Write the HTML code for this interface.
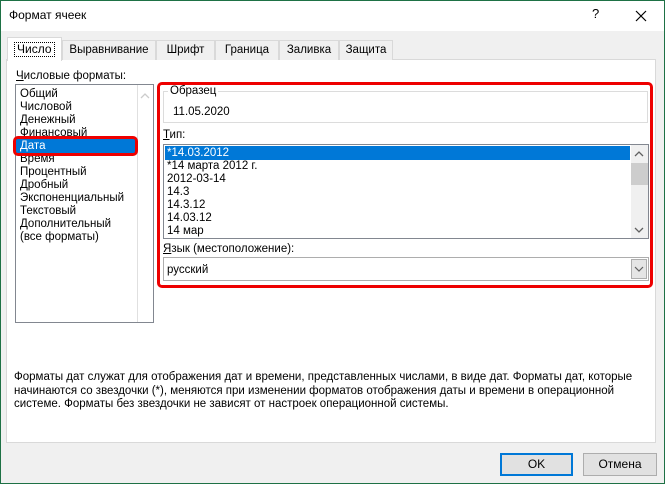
<!DOCTYPE html>
<html><head><meta charset="utf-8"><style>
*{box-sizing:border-box;margin:0;padding:0}
body{width:665px;height:484px;overflow:hidden;background:#f0f0f0;font-family:"Liberation Sans",sans-serif;font-size:11.5px;color:#000;position:relative}
.a{position:absolute}
.win{left:0;top:0;width:665px;height:484px;border:1px solid #1e7145}
.title{left:1px;top:1px;width:663px;height:30px;background:#fff}
.tab{top:40px;height:20px;background:#f0f0f0;border:1px solid #d9d9d9;border-bottom:none;text-align:center;line-height:19px}
.panel{left:6px;top:59px;width:650px;height:384px;background:#fff;border:1px solid #d9d9d9}
.li{left:20px;line-height:13px;white-space:nowrap}
.red{border:3px solid #e00;border-radius:5px}
.btn{top:453px;height:23px;background:#e1e1e1;border:1px solid #adadad;text-align:center;line-height:21px;font-size:12px}
</style></head><body>
<div class="a win"></div>
<div class="a title"></div>
<div class="a" style="left:9px;top:8px;font-size:12px">Формат ячеек</div>
<div class="a" style="left:592px;top:6px;font-size:13px">?</div>
<svg class="a" style="left:635px;top:10px" width="12" height="12"><path d="M1 1L11 11M11 1L1 11" stroke="#000" stroke-width="1.2"/></svg>
<div class="a panel"></div>
<div class="a tab" style="left:62px;width:94px">Выравнивание</div>
<div class="a tab" style="left:156px;width:59px">Шрифт</div>
<div class="a tab" style="left:215px;width:64px">Граница</div>
<div class="a tab" style="left:279px;width:60px">Заливка</div>
<div class="a tab" style="left:339px;width:54px">Защита</div>
<div class="a" style="left:7px;top:37px;width:55px;height:24px;background:#fff;border:1px solid #d9d9d9;border-bottom:none"></div>
<div class="a" style="left:14px;top:42px;padding:0 2px;border:1px dotted #000;line-height:13px;font-size:12px">Число</div>
<div class="a" style="left:16px;top:70px"><u>Ч</u>исловые форматы:</div>
<div class="a" style="left:15px;top:84px;width:139px;height:239px;border:1px solid #828790;background:#fff"></div>
<div class="a" style="left:137px;top:85px;width:1px;height:237px;background:#e0e0e0"></div>
<svg class="a" style="left:140px;top:93px" width="10" height="6"><path d="M1 5L5 1L9 5" stroke="#ccc" fill="none" stroke-width="1.3"/></svg>
<div class="a" style="left:16px;top:139px;width:120px;height:14px;background:#0078d7"></div>
<div class="a li" style="top:88px">Общий</div>
<div class="a li" style="top:101px">Числовой</div>
<div class="a li" style="top:114px">Денежный</div>
<div class="a li" style="top:127px">Финансовый</div>
<div class="a li" style="top:140px;color:#fff">Дата</div>
<div class="a li" style="top:153px">Время</div>
<div class="a li" style="top:166px">Процентный</div>
<div class="a li" style="top:179px">Дробный</div>
<div class="a li" style="top:192px">Экспоненциальный</div>
<div class="a li" style="top:205px">Текстовый</div>
<div class="a li" style="top:218px">Дополнительный</div>
<div class="a li" style="top:231px">(все форматы)</div>
<div class="a red" style="left:13px;top:136px;width:125px;height:20px"></div>

<div class="a" style="left:163px;top:91px;width:485px;height:32px;border:1px solid #dcdcdc"></div>
<div class="a" style="left:168px;top:85px;background:#fff;padding:0 2px">Образец</div>
<div class="a" style="left:173px;top:106px">11.05.2020</div>
<div class="a" style="left:163px;top:129px"><u>Т</u>ип:</div>
<div class="a" style="left:163px;top:144px;width:486px;height:95px;border:1px solid #828790;background:#fff"></div>
<div class="a" style="left:165px;top:146px;width:465px;height:14px;background:#0078d7"></div>
<div class="a" style="left:631px;top:145px;width:17px;height:93px;background:#f0f0f0"></div>
<div class="a" style="left:631px;top:163px;width:17px;height:22px;background:#cdcdcd"></div>
<svg class="a" style="left:634px;top:151px" width="10" height="6"><path d="M1 5L5 1L9 5" stroke="#606060" fill="none" stroke-width="1.3"/></svg>
<svg class="a" style="left:634px;top:227px" width="10" height="6"><path d="M1 1L5 5L9 1" stroke="#606060" fill="none" stroke-width="1.3"/></svg>
<div class="a li" style="left:167px;top:147px;color:#fff">*14.03.2012</div>
<div class="a li" style="left:167px;top:160px">*14 марта 2012 г.</div>
<div class="a li" style="left:167px;top:173px">2012-03-14</div>
<div class="a li" style="left:167px;top:186px">14.3</div>
<div class="a li" style="left:167px;top:199px">14.3.12</div>
<div class="a li" style="left:167px;top:212px">14.03.12</div>
<div class="a li" style="left:167px;top:225px">14 мар</div>
<div class="a" style="left:163px;top:243px"><u>Я</u>зык (местоположение):</div>
<div class="a" style="left:163px;top:257px;width:486px;height:24px;border:1px solid #adadad;background:#fff"></div>
<div class="a" style="left:631px;top:259px;width:16px;height:20px;background:#e5e5e5;border:1px solid #adadad"></div>
<svg class="a" style="left:634px;top:266px" width="10" height="6"><path d="M1 1L5 5L9 1" stroke="#606060" fill="none" stroke-width="1.2"/></svg>
<div class="a" style="left:167px;top:264px">русский</div>
<div class="a red" style="left:157px;top:82px;width:496px;height:206px"></div>

<div class="a" style="left:14px;top:371px;width:630px;line-height:13.5px">Форматы дат служат для отображения дат и времени, представленных числами, в виде дат. Форматы дат, которые начинаются со звездочки (*), меняются при изменении форматов отображения даты и времени в операционной системе. Форматы без звездочки не зависят от настроек операционной системы.</div>
<div class="a btn" style="left:500px;width:73px;border:2px solid #0078d7;line-height:19px">OK</div>
<div class="a btn" style="left:583px;width:74px">Отмена</div>
</body></html>
